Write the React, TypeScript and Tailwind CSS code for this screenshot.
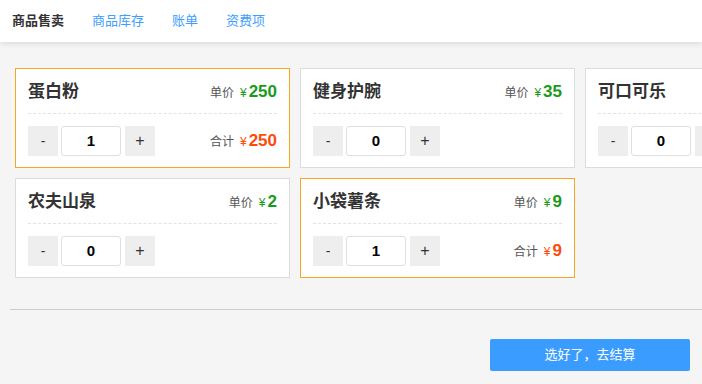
import { useState } from "react";

const TABS = ["商品售卖", "商品库存", "账单", "资费项"];

const GOODS = [
  { name: "蛋白粉", price: 250, count: 1 },
  { name: "健身护腕", price: 35, count: 0 },
  { name: "可口可乐", price: 3, count: 0 },
  { name: "农夫山泉", price: 2, count: 0 },
  { name: "小袋薯条", price: 9, count: 1 },
];

const FONT = "font-['Liberation_Sans','Noto_Sans_CJK_SC',sans-serif]";

export default function App() {
  const [counts, setCounts] = useState(GOODS.map((g) => g.count));

  const change = (i: number, d: number) =>
    setCounts((c) => c.map((v, j) => (j === i ? Math.max(0, v + d) : v)));

  return (
    <div className={`${FONT} min-h-[384px] w-full overflow-hidden bg-[#f5f5f5] text-[#333]`}>
      {/* Tabs */}
      <div className="relative z-10 flex h-[42px] items-center gap-[28px] bg-white px-[12px] text-[13px] shadow-[0_2px_5px_rgba(0,0,0,0.1)]">
        {TABS.map((t, i) => (
          <span key={t} className={i === 0 ? "font-bold text-[#333]" : "text-[#409eff]"}>
            {t}
          </span>
        ))}
      </div>

      {/* Goods */}
      <div className="grid w-[900px] grid-cols-[repeat(3,275px)] gap-[10px] pl-[15px] pt-[26px]">
        {GOODS.map((g, i) => {
          const n = counts[i];
          const active = n > 0;
          return (
            <div
              key={g.name}
              className={`h-[100px] border bg-white px-[12px] pt-[12px] ${
                active ? "border-[#f5a623]" : "border-[#dcdcdc]"
              }`}
            >
              <div className="flex h-[22px] items-center justify-between">
                <span className="text-[17px] font-bold text-[#333]">{g.name}</span>
                <span className="flex items-baseline">
                  <span className="text-[12px] text-[#555]">单价</span>
                  <span className="ml-[6px] text-[12px] text-[#1a9a1a]">¥</span>
                  <span className="ml-[2px] text-[17px] font-bold text-[#1a9a1a]">{g.price}</span>
                </span>
              </div>
              <div className="mt-[10px] border-t border-dashed border-[#e2e2e2]" />
              <div className="mt-[12px] flex h-[30px] items-center justify-between">
                <div className="flex items-center">
                  <button
                    onClick={() => change(i, -1)}
                    className="h-[30px] w-[30px] bg-[#eeeeee] text-[14px] text-[#333]"
                  >
                    -
                  </button>
                  <div className="ml-[3px] flex h-[30px] w-[60px] items-center justify-center rounded-[3px] border border-[#dcdfe6] text-[15px] font-bold text-black">
                    {n}
                  </div>
                  <button
                    onClick={() => change(i, 1)}
                    className="ml-[4px] h-[30px] w-[30px] bg-[#eeeeee] text-[16px] text-[#333]"
                  >
                    +
                  </button>
                </div>
                {active && (
                  <span className="flex items-baseline">
                    <span className="text-[12px] text-[#555]">合计</span>
                    <span className="ml-[6px] text-[12px] text-[#ff4a0a]">¥</span>
                    <span className="ml-[2px] text-[17px] font-bold text-[#ff4a0a]">{g.price * n}</span>
                  </span>
                )}
              </div>
            </div>
          );
        })}
      </div>

      {/* Footer */}
      <div className="ml-[10px] mt-[31px] border-t border-[#cccccc]" />
      <div className="flex justify-end pr-[12px] pt-[29px]">
        <button className="h-[32px] w-[200px] rounded-[2px] bg-[#3a9cff] text-[13px] text-white">
          选好了，去结算
        </button>
      </div>
    </div>
  );
}
